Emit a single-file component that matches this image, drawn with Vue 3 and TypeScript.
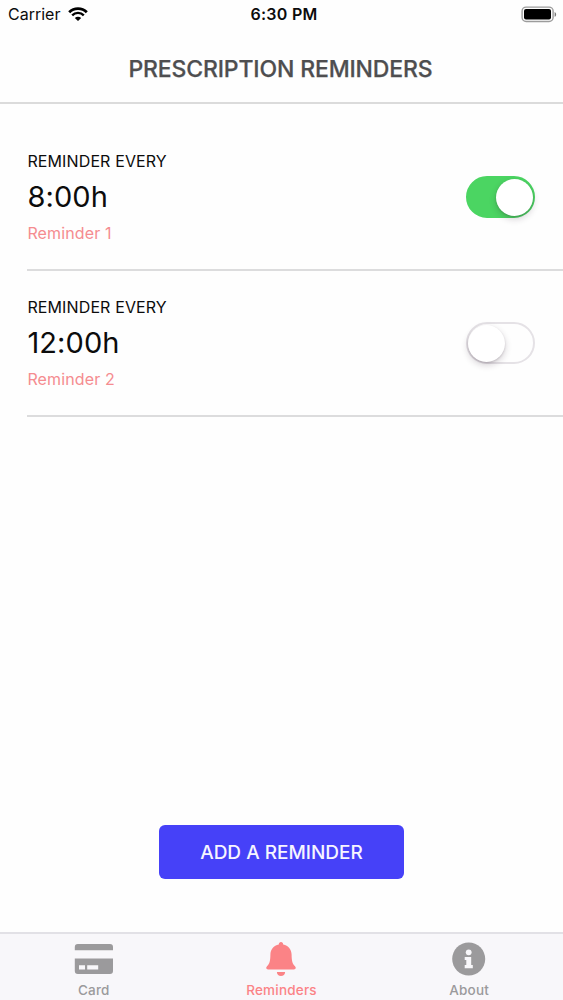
<script setup lang="ts">
import { ref } from 'vue'

interface Reminder {
  id: number
  time: string
  label: string
  enabled: boolean
}

const reminders = ref<Reminder[]>([
  { id: 1, time: '8:00h', label: 'Reminder 1', enabled: true },
  { id: 2, time: '12:00h', label: 'Reminder 2', enabled: false },
])

const activeTab = ref('reminders')
</script>

<template>
  <div class="screen">
    <div class="status">
      <div class="carrier">
        <span class="carrier-name">Carrier</span>
        <svg class="wifi" width="20" height="15" viewBox="0 0 20 15">
          <path d="M1.2 5.2C6.1 .3 13.9 .3 18.8 5.2" fill="none" stroke="#000" stroke-width="2.8" />
          <path d="M4.2 8.3C7.4 5.1 12.6 5.1 15.8 8.3" fill="none" stroke="#000" stroke-width="2.4" />
          <path d="M6.8 10.9C8.6 9.2 11.4 9.2 13.2 10.9L10 14Z" fill="#000" />
        </svg>
      </div>
      <span class="clock">6:30 PM</span>
      <svg class="battery" width="36" height="17" viewBox="0 0 36 17">
        <rect x="1.1" y="1.1" width="31" height="14.4" rx="4" fill="none" stroke="#9c9c9c" stroke-width="1.4" />
        <rect x="3" y="3.1" width="27" height="10.4" rx="2" fill="#000" />
        <path d="M33.6 5.9C35.6 6.7 35.6 10 33.6 10.8Z" fill="#777" />
      </svg>
    </div>

    <header class="header">
      <h1 class="title">PRESCRIPTION REMINDERS</h1>
    </header>

    <main class="content">
      <ul class="list">
        <li v-for="item in reminders" :key="item.id" class="row">
          <div class="info">
            <span class="every">REMINDER EVERY</span>
            <span class="time">{{ item.time }}</span>
            <span class="label">{{ item.label }}</span>
          </div>
          <button
            class="switch"
            :class="{ on: item.enabled }"
            role="switch"
            :aria-checked="item.enabled"
            :aria-label="item.label"
            @click="item.enabled = !item.enabled"
          >
            <span class="knob"></span>
          </button>
        </li>
      </ul>
      <button class="add">ADD A REMINDER</button>
    </main>

    <nav class="tabs">
      <button class="tab" :class="{ active: activeTab === 'card' }" @click="activeTab = 'card'">
        <svg class="tab-icon" width="40" height="36" viewBox="0 0 40 36">
          <path
            fill="currentColor"
            fill-rule="evenodd"
            d="M.8 8.3V5Q.8 2 3.8 2H36Q39 2 39 5V8.3ZM.8 16.6H39V29Q39 32 36 32H3.8Q.8 32 .8 29ZM5 23.2V27.6H11V23.2ZM13.2 23.2V27.6H24.2V23.2Z"
          />
        </svg>
        <span class="tab-text">Card</span>
      </button>
      <button class="tab" :class="{ active: activeTab === 'reminders' }" @click="activeTab = 'reminders'">
        <svg class="tab-icon" width="40" height="36" viewBox="0 0 40 36">
          <path
            fill="currentColor"
            d="M20 0C21.3 0 22.2 .9 22.2 2.4C27.3 3.5 30.6 7.3 30.6 12.5C30.6 19.3 31.6 21.9 33.8 24.1C35.5 25.8 34.7 27.4 33 27.4H7C5.3 27.4 4.5 25.8 6.2 24.1C8.4 21.9 9.4 19.3 9.4 12.5C9.4 7.3 12.7 3.5 17.8 2.4C17.8 .9 18.7 0 20 0ZM15.9 30H24.1C24.1 32.4 22.3 34 20 34C17.7 34 15.9 32.4 15.9 30Z"
          />
        </svg>
        <span class="tab-text">Reminders</span>
      </button>
      <button class="tab" :class="{ active: activeTab === 'about' }" @click="activeTab = 'about'">
        <svg class="tab-icon" width="40" height="36" viewBox="0 0 40 36">
          <circle cx="19.7" cy="17" r="16.5" fill="currentColor" />
          <circle cx="19.7" cy="10.3" r="2.9" fill="#f8f7fa" />
          <path fill="#f8f7fa" d="M15.7 14.9H22.2V22.9H23.8V26.2H15.7V22.9H17.3V18.1H15.7Z" />
        </svg>
        <span class="tab-text">About</span>
      </button>
    </nav>
  </div>
</template>

<style>
body {
  margin: 0;
  background: #fff;
}
</style>

<style scoped>
.screen {
  display: flex;
  flex-direction: column;
  width: 563px;
  height: 1000px;
  overflow: hidden;
  background: #fefefe;
  color: #0c0c0c;
  font-family: Inter, "Liberation Sans", sans-serif;
}

button {
  border: 0;
  padding: 0;
  background: none;
  font: inherit;
  color: inherit;
}

.status {
  display: grid;
  grid-template-columns: 1fr auto 1fr;
  align-items: center;
  height: 28px;
  padding: 0 6px 0 8px;
  box-sizing: border-box;
}

.carrier {
  display: flex;
  align-items: center;
  gap: 8px;
  font-size: 16px;
}

.clock {
  padding-left: 3px;
  font-size: 16px;
  font-weight: 600;
  letter-spacing: 0.25px;
}

.battery {
  justify-self: end;
}

.header {
  display: flex;
  align-items: center;
  justify-content: center;
  height: 76px;
  box-sizing: border-box;
  border-bottom: 2px solid #dbdbdb;
}

.title {
  margin: 0;
  padding: 7px 2px 0 0;
  font-size: 23px;
  font-weight: 500;
  line-height: 28px;
  letter-spacing: -0.15px;
  color: #4e4e50;
  -webkit-text-stroke: 0.25px #4e4e50;
}

.content {
  display: flex;
  flex: 1;
  flex-direction: column;
  align-items: center;
  justify-content: space-between;
  padding: 21px 0 53px;
}

.list {
  align-self: stretch;
  margin: 0;
  padding: 0 0 0 27px;
  list-style: none;
}

.row {
  display: flex;
  align-items: center;
  justify-content: space-between;
  height: 146px;
  box-sizing: border-box;
  padding-right: 28px;
  border-bottom: 2px solid #dcdcdd;
}

.info {
  display: flex;
  flex-direction: column;
  padding-left: 0.4px;
}

.every {
  font-size: 16px;
  line-height: 24px;
  letter-spacing: 0.12px;
}

.time {
  font-size: 29px;
  line-height: 48px;
  letter-spacing: 0.1px;
}

.label {
  font-size: 16px;
  line-height: 24px;
  letter-spacing: 0.15px;
  color: #f58c90;
}

.switch {
  display: flex;
  align-items: center;
  width: 69px;
  height: 42px;
  box-sizing: border-box;
  border: 2.5px solid #e5e2e6;
  border-radius: 21px;
  background: #fefefe;
}

.switch.on {
  justify-content: flex-end;
  border-color: #4bd562;
  background: #4bd562;
}

.knob {
  width: 37px;
  height: 37px;
  border-radius: 50%;
  background: #fff;
  box-shadow: 0 3px 7px rgba(40, 20, 40, 0.2), 0 1px 2px rgba(40, 20, 40, 0.16);
}

.add {
  width: 245px;
  height: 54px;
  border-radius: 6px;
  background: #4641f8;
  color: #f6f5ff;
  font-size: 19px;
  font-weight: 500;
}

.tabs {
  display: grid;
  grid-template-columns: repeat(3, 1fr);
  height: 68px;
  box-sizing: border-box;
  border-top: 2px solid #e2e1e6;
  background: #f8f7fa;
}

.tab {
  display: flex;
  flex-direction: column;
  align-items: center;
  padding-top: 8px;
  color: #9b9a9c;
}

.tab.active {
  color: #fb8386;
}

.tab-icon {
  flex: none;
}

.tab-text {
  margin-top: 3px;
  font-size: 13.5px;
  line-height: 18px;
  font-weight: 500;
  letter-spacing: 0.2px;
}
</style>
